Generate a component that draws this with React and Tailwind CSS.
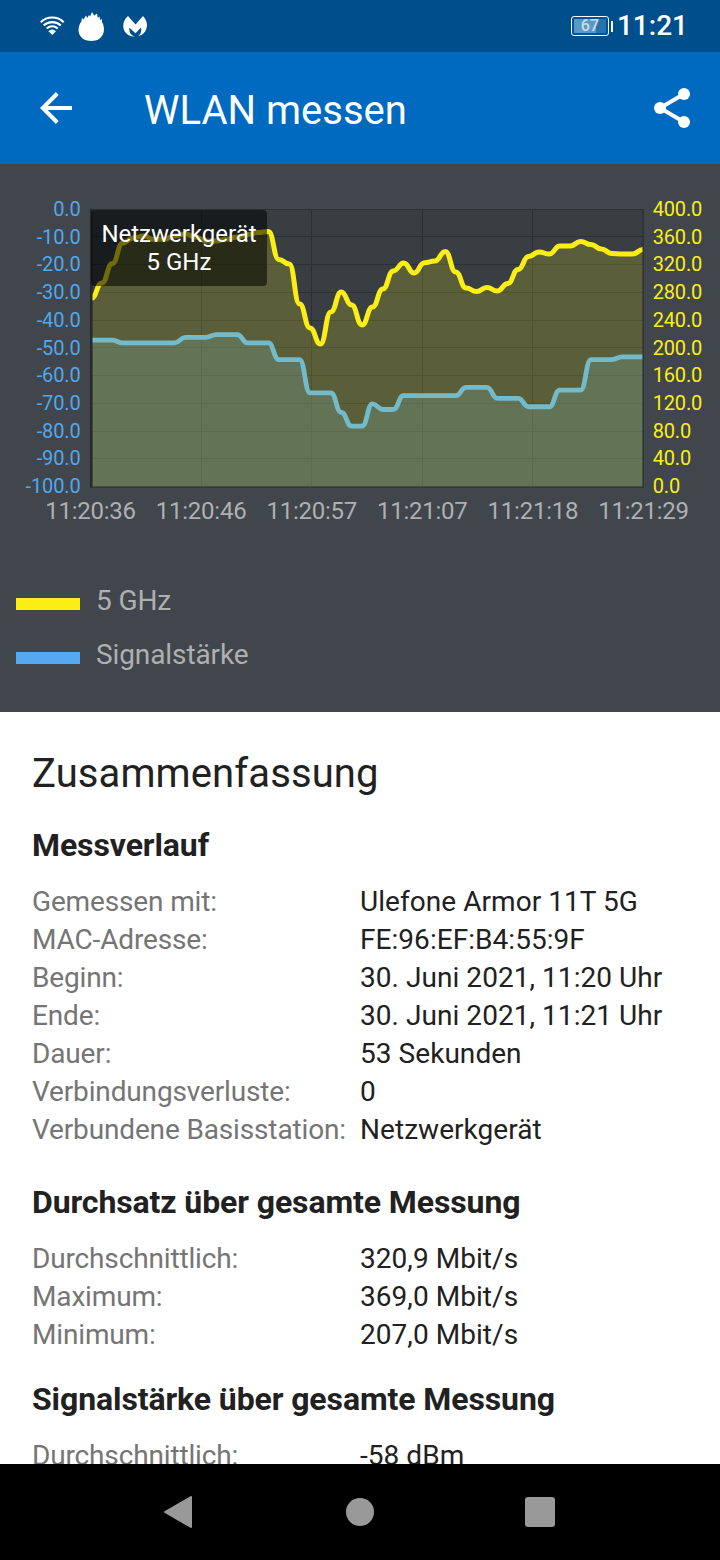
const STEP = 551.5 / 53;
const LEFT = 91.5;
const BOTTOM = 323;

// Vertical plot positions of the throughput samples, one per second
const throughput = [
  134, 119, 99.5, 79, 74, 72, 75.5, 75, 72, 70, 73, 77, 77, 75, 73, 70.5, 68.5, 67.5, 95.5, 100, 140, 164, 180,
  148, 128, 141, 161, 143, 125, 107, 99, 109, 98.7, 97, 87.5, 108, 124, 127.5, 123.5, 127, 119.5, 105.5, 92.5, 88,
  90, 82, 82, 77.5, 80.5, 85, 89.5, 90, 90, 85.5,
];

// Signal strength in dBm as [value, number of samples]
const signalRuns = [
  [47, 3], [48, 6], [46, 3], [45, 3], [48, 3], [54, 3], [66, 3], [73, 1], [78, 2], [70, 1], [72, 2], [67, 6],
  [64, 3], [68, 3], [71, 3], [65, 3], [54, 3], [53, 3],
];
const signal = signalRuns.flatMap(([v, n]) => Array(n).fill(45.7 + v * 2.775));

function curve(ys) {
  return ys
    .map((y, i) => {
      const x = LEFT + i * STEP;
      if (i === 0) return `M${x} ${y}`;
      const mid = x - STEP / 2;
      return `C${mid} ${ys[i - 1]} ${mid} ${y} ${x} ${y}`;
    })
    .join("");
}
const area = (ys) => `${curve(ys)}V${BOTTOM}H${LEFT}Z`;

const times = ["11:20:36", "11:20:46", "11:20:57", "11:21:07", "11:21:18", "11:21:29"];
const rows = [0, 1, 2, 3, 4, 5, 6, 7, 8, 9, 10];

function Chart() {
  return (
    <svg width="720" height="380" viewBox="0 0 720 380" className="block">
      <defs>
        <clipPath id="plot">
          <rect x="92" y="45" width="551" height="278.5" />
        </clipPath>
      </defs>
      <rect x="91" y="45" width="552" height="278" fill="#393e43" />
      {rows.map((i) => (
        <line key={i} x1="91" x2="643" y1={45.5 + Math.floor(i * 27.75)} y2={45.5 + Math.floor(i * 27.75)} stroke="#2b3035" />
      ))}
      {[201.5, 311.5, 422.5, 532.5].map((x) => (
        <line key={x} x1={x} x2={x} y1="45" y2="323" stroke="#2b3035" />
      ))}
      <g clipPath="url(#plot)">
        <path d={area(throughput)} fill="#e6e612" fillOpacity="0.2" />
        <path d={curve(throughput)} fill="none" stroke="#fbee16" strokeWidth="5" />
        <path d={area(signal)} fill="#7aa59a" fillOpacity="0.29" />
        <path d={curve(signal)} fill="none" stroke="#73bbcb" strokeWidth="4.8" />
      </g>
      <rect x="90" y="45" width="2.5" height="278" fill="#25292b" />
      <rect x="642.5" y="45" width="1.2" height="278" fill="#292d30" />
      <rect x="90" y="322.6" width="554" height="1" fill="#2b312d" />
      <g fontSize="20">
        {rows.map((i) => (
          <g key={i}>
            <text x="80.7" y={52 + i * 27.7} textAnchor="end" letterSpacing="-0.1" fill="#52a7ee">{i ? `-${i}0.0` : "0.0"}</text>
            <text x="652.7" y={52 + i * 27.7} letterSpacing="-0.15" fill="#fbee16">{`${400 - i * 40}.0`}</text>
          </g>
        ))}
      </g>
      <g fontSize="24" fill="#aeb0b1" textAnchor="middle" letterSpacing="-0.25">
        {times.map((t, i) => (
          <text key={t} x={90.5 + i * 110.6} y="355">{t}</text>
        ))}
      </g>
    </svg>
  );
}

function StatusBar() {
  return (
    <div className="flex h-[52px] shrink-0 items-center bg-[#004f8d] pl-10 pr-8 text-white">
      <svg width="110" height="32" viewBox="0 0 110 32" fill="none">
        <g stroke="#fff" strokeWidth="2.1">
          <path d="M.8 12.2C7 6 17.5 6 23.7 12.2" />
          <path d="M3.7 15.4C8.5 11 16 11 20.8 15.4" />
          <path d="M6.7 18.5C10 15.6 14.5 15.6 17.7 18.5" />
        </g>
        <path d="M8.4 21.3Q12.2 17.8 16 21.3L12.2 25Z" fill="#fff" />
        <path d="M41.3 11.5L42 8L43.5 9.5L46 5.5L47.2 8L49 5L50 6.5L52 2L54.2 5.5L57 3.5L57.8 8L59.5 6.5L60.2 10.5L62 8.5V12C66.5 20 63.5 31 51.5 31C39 31 35.5 20 41.3 11.5Z" fill="#fff" />
        <path d="M88 6L95.5 14.5L103 6C109 12 108 21 101.5 25L98.2 26C101 24 101.8 21 101 17.6L95.5 23.2L89.4 17.8C88.8 22 91 25.6 95.2 26.8C82 26 80 13 88 6Z" fill="#fff" />
      </svg>
      <div className="ml-auto flex items-center">
        <div className="flex h-5 w-[38px] items-center justify-center rounded-[3px] border border-white bg-[#00549a] p-0.5">
          <div className="flex h-full w-full items-center justify-center bg-[linear-gradient(90deg,#5a98c8_70%,#2973ad_70%)] text-[16px] font-medium leading-none text-[#cbdce9]">67</div>
        </div>
        <div className="ml-0.5 h-[11px] w-0.5 bg-white" />
        <span className="ml-1 text-[28px] font-medium leading-[52px]">11:21</span>
      </div>
    </div>
  );
}

function Section({ title, items, className }) {
  return (
    <section className={className}>
      <h2 className="mb-[19px] text-[32px] font-bold leading-[38px] tracking-[-0.1px] text-[#212121]">{title}</h2>
      <dl className="grid grid-cols-[328px_1fr] text-[28px] leading-[38px]">
        {items.map(([k, v]) => (
          <div key={k} className="contents">
            <dt className="whitespace-nowrap tracking-[-0.15px] text-[#757575]">{k}</dt>
            <dd className="whitespace-nowrap tracking-[0.05px] text-[#212121]">{v}</dd>
          </div>
        ))}
      </dl>
    </section>
  );
}

function Legend({ color, label }) {
  return (
    <div className="flex h-[54px] items-center gap-4 pl-4">
      <div className={`mt-[5px] h-3 w-16 ${color}`} />
      <span className="text-[28px] leading-[38px] tracking-[-0.1px] text-[#aeb0b1]">{label}</span>
    </div>
  );
}

export default function App() {
  return (
    <div className="flex h-[1560px] w-[720px] flex-col overflow-hidden bg-white font-[Roboto,sans-serif]">
      <StatusBar />
      <header className="flex h-28 shrink-0 items-center bg-[#006ac1] pl-10 pr-[28px] text-white">
        <svg width="32" height="32" viewBox="0 0 32 32" fill="none" stroke="#fff" strokeWidth="4">
          <path d="M32 16H3M17.3 1.5L2.8 16L17.3 30.5" />
        </svg>
        <h1 className="ml-[72px] mt-[5px] text-[40px] leading-[48px]">WLAN messen</h1>
        <svg className="ml-auto" width="38" height="40" viewBox="0 0 38 40" fill="#fff">
          <path d="M30 6L6 20L30 34" fill="none" stroke="#fff" strokeWidth="4" />
          <circle cx="30" cy="6" r="6" />
          <circle cx="6" cy="20" r="6" />
          <circle cx="30" cy="34" r="6" />
        </svg>
      </header>
      <div className="relative h-[548px] shrink-0 bg-[#40464b]">
        <Chart />
        <div className="absolute left-[91px] top-[46px] flex h-[76px] w-44 flex-col items-center rounded-[4px] bg-black/55 pt-2.5 text-[24px] leading-7 text-white">
          <span>Netzwerkgerät</span>
          <span>5 GHz</span>
        </div>
        <div className="pt-[30px]">
          <Legend color="bg-[#fbee16]" label="5 GHz" />
          <Legend color="bg-[#54a9f0]" label="Signalstärke" />
        </div>
      </div>
      <main className="min-h-0 flex-1 overflow-hidden px-8 pt-[38px]">
        <h1 className="text-[40px] leading-[48px] tracking-[0.1px] text-[#212121]">Zusammenfassung</h1>
        <Section
          className="mt-[28px]"
          title="Messverlauf"
          items={[
            ["Gemessen mit:", "Ulefone Armor 11T 5G"],
            ["MAC-Adresse:", "FE:96:EF:B4:55:9F"],
            ["Beginn:", "30. Juni 2021, 11:20 Uhr"],
            ["Ende:", "30. Juni 2021, 11:21 Uhr"],
            ["Dauer:", "53 Sekunden"],
            ["Verbindungsverluste:", "0"],
            ["Verbundene Basisstation:", "Netzwerkgerät"],
          ]}
        />
        <Section
          className="mt-[34px]"
          title="Durchsatz über gesamte Messung"
          items={[
            ["Durchschnittlich:", "320,9 Mbit/s"],
            ["Maximum:", "369,0 Mbit/s"],
            ["Minimum:", "207,0 Mbit/s"],
          ]}
        />
        <Section
          className="mt-[26px]"
          title="Signalstärke über gesamte Messung"
          items={[["Durchschnittlich:", "-58 dBm"]]}
        />
      </main>
      <nav className="flex h-24 shrink-0 items-center justify-between bg-black pl-[164px] pr-[165px]">
        <svg width="28" height="32" viewBox="0 0 28 32">
          <path d="M1 16L27 1V31Z" fill="#999" stroke="#999" strokeWidth="2" strokeLinejoin="round" />
        </svg>
        <div className="ml-0.5 h-7 w-7 rounded-full bg-[#999]" />
        <div className="h-[30px] w-[30px] rounded-[3px] bg-[#999]" />
      </nav>
    </div>
  );
}
